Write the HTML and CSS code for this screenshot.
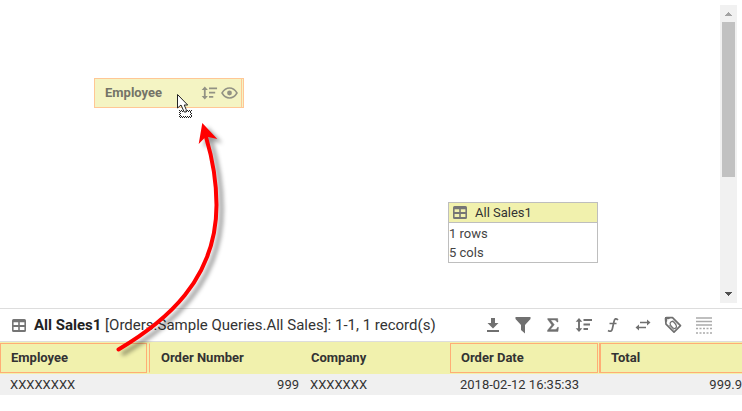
FILE: index.html
```html
<!DOCTYPE html>
<html lang="en">
<head>
<meta charset="utf-8">
<title>All Sales</title>
<link rel="stylesheet" href="styles.css">
</head>
<body>
<svg width="0" height="0" class="defs">
  <symbol id="table" viewBox="0 0 14 12"><path fill-rule="evenodd" d="M1.500 0h11Q14 0 14 1.500v9Q14 12 12.500 12h-11Q0 12 0 10.500v-9Q0 0 1.500 0zM1.600 3v2.600h4.600V3zM7.800 3v2.600h4.600V3zM1.600 7.300v2.900h4.600V7.300zM7.800 7.300v2.900h4.600V7.300z" fill="currentColor"/></symbol>
  <symbol id="sort" viewBox="0 0 18 14"><path d="M4 2v10M8.500 2h8.500M8.500 6.500h6.500M8.500 11h4.500" fill="none" stroke="currentColor" stroke-width="1.900"/><path d="M4 0l3.300 3.700H.700zM4 14l3.300-3.700H.700z" fill="currentColor"/></symbol>
</svg>
<div class="app">
  <main class="canvas">
    <div class="dragged">
      <span class="name">Employee</span>
      <svg class="drag-sort" width="17" height="14"><use href="#sort"/></svg>
      <svg class="eye" width="17" height="12" viewBox="0 0 17 12"><path d="M1 6Q4 1 8.500 1T16 6Q13 11 8.500 11T1 6z" fill="none" stroke="currentColor" stroke-width="1.500"/><circle cx="8.500" cy="6" r="2.400" fill="currentColor"/></svg>
    </div>
    <div class="node">
      <div class="node-title"><svg width="14" height="13" viewBox="0 0 14 12" preserveAspectRatio="none"><use href="#table" width="14" height="12"/></svg><span>All Sales1</span></div>
      <div class="node-body"><div>1 rows</div><div>5 cols</div></div>
    </div>
    <div class="scrollbar">
      <svg class="arrow up" width="7" height="4" viewBox="0 0 7 4"><path d="M3 0h1v1h1v1h1v1h1v1H0V3h1V2h1V1h1z"/></svg>
      <div class="thumb"></div>
      <svg class="arrow down" width="7" height="4" viewBox="0 0 7 4"><path d="M0 0h7v1H6v1H5v1H4v1H3V3H2V2H1V1H0z"/></svg>
    </div>
  </main>
  <header class="toolbar">
    <svg class="title-icon" width="14" height="13" viewBox="0 0 14 12" preserveAspectRatio="none"><use href="#table" width="14" height="12"/></svg>
    <div class="title"><b>All Sales1</b> [Orders.Sample Queries.All Sales]: 1-1, 1 record(s)</div>
    <div class="tools">
      <svg width="14" height="16" viewBox="0 0 14 16"><path d="M5 1h4v5h3.500L7 11.500 1.500 6H5zM1 13h12v2H1z" fill="currentColor"/></svg>
      <svg width="16" height="18" viewBox="0 0 16 18"><path d="M.500 1h15v2L10 9v8.500L6 14V9L.500 3z" fill="currentColor"/></svg>
      <svg width="12" height="14" viewBox="0 0 12 14"><path d="M.700.500h10l.3 3.500h-1Q9.500 2 7.500 2H3.700L7.300 6.700 3.300 11.500H8q2 0 2.500-2.200h1L11 13.500H.500v-1.200L4.800 7 .700 1.500z" fill="currentColor" stroke="currentColor" stroke-width=".4"/></svg>
      <svg width="18" height="14"><use href="#sort"/></svg>
      <svg class="fx" width="12" height="16" viewBox="0 0 12 16"><path d="M11 3Q8 0 7 4.500L5.300 12Q4.500 15.500 1 13.500M2.500 6.500h7" fill="none" stroke="currentColor" stroke-width="1.700"/></svg>
      <svg class="swap" width="16" height="14" viewBox="0 0 16 14"><path d="M5 4.500h8M3 9.500h8" stroke="currentColor" stroke-width="1.500"/><path d="M12 1.500l3.500 3-3.500 3zM4 6.500v6l-3.500-3z" fill="currentColor"/></svg>
      <svg class="tag" width="18" height="18" viewBox="0 0 18 18"><path d="M1.500 2.500l1-1 6 .2 8 8-6.500 6.500-8-8z" fill="none" stroke="currentColor" stroke-width="1.700" stroke-linejoin="round"/><path d="M1 1h6L1.500 7z" fill="currentColor"/><path d="M5 9l5 5M8.500 4l4.500 4.500" stroke="currentColor" stroke-width=".6"/><ellipse cx="9.300" cy="9" rx="2.300" ry="3.900" transform="rotate(-38 9.300 9)" fill="none" stroke="currentColor" stroke-width="1.200"/><circle cx="4" cy="4" r="1" fill="#fff"/></svg>
      <svg class="rows" width="16" height="17" viewBox="0 0 16 17"><path d="M0 1h16M0 4.500h16M0 8h16" stroke="currentColor" stroke-width="1.600"/><path d="M0 11.500h16M0 16h16" stroke="currentColor" stroke-width="1.400" stroke-dasharray="2 1.500"/></svg>
    </div>
  </header>
  <section class="grid">
    <div class="row head">
      <div class="cell box first">Employee</div><div class="cell divided">Order Number</div><div class="cell">Company</div><div class="cell box date">Order Date</div><div class="cell box total">Total</div>
    </div>
    <div class="row data">
      <div class="cell">XXXXXXXX</div><div class="cell number">999</div><div class="cell">XXXXXXX</div><div class="cell">2018-02-12 16:35:33</div><div class="cell number last">999.9</div>
    </div>
  </section>
  <svg class="overlay" width="742" height="411" viewBox="0 0 742 411">
    <g class="trail">
      <path d="M118.500 349.500C165 322 216.500 280 216.500 205C216.500 182 212 157 206 137" fill="none" stroke="#f00" stroke-width="4" stroke-linecap="round"/>
      <path d="M202.300 123L217.300 139L206 136.500L198.700 144z" fill="#f00"/>
    </g>
    <g shape-rendering="crispEdges">
      <rect x="179" y="110" width="13" height="8" fill="#fff"/>
      <path d="M179 110.500h13M179 112.500h2M190 112.500h2M179 114.500h2M190 114.500h2M179 116.500h13" stroke="#222" stroke-dasharray="1 1"/>
      <path d="M180 111.500h12M180 113.500h1M191 113.500h1M180 115.500h1M191 115.500h1M180 117.500h12" stroke="#222" stroke-dasharray="1 1"/>
    </g>
    <path d="M177.500 94.500v13.500l3.500-3 3.200 7h2v-2.500l-2-4.500h3.500z" fill="#fff" stroke="#222"/>
  </svg>
</div>
</body>
</html>
```
FILE: styles.css
```css
* { box-sizing: border-box; }
body { margin: 0; background: #fff; color: #333; font: 13px/18px Roboto, sans-serif; }
svg { display: block; flex: none; }
.defs { position: absolute; }
.app { position: relative; width: 742px; height: 411px; overflow: hidden; }
.canvas { position: relative; height: 308px; display: flex; justify-content: flex-end; padding: 5px 5px 5px 0; }
.dragged { position: absolute; left: 94px; top: 78px; width: 150px; height: 30px; display: flex; align-items: center; padding-left: 10px; color: #929284; background: #f4f4c3; border: 1px solid #ffc795; }
.dragged::after { content: ""; position: absolute; right: 1px; top: 0; bottom: 0; border-left: 1px solid #ffc795; }
.dragged .name { width: 96px; color: #747468; font-weight: 700; }
.eye { margin-left: 3px; }
.node { position: absolute; left: 448px; top: 202px; width: 150px; height: 61px; border: 1px solid #bebebe; background: #fff; }
.node-title { height: 20px; display: flex; align-items: center; gap: 8px; padding-left: 4px; background: #f1f1ad; border-bottom: 1px solid #bebebe; }
.node-title svg { color: #757575; }
.node-body { line-height: 19px; padding-top: 1px; color: #444; }
.scrollbar { width: 17px; height: 298px; display: flex; flex-direction: column; align-items: center; background: #f1f1f1; }
.thumb { width: 13px; height: 155px; background: #c1c1c1; margin-top: 6px; }
.arrow.up { margin-top: 7px; fill: #a3a3a3; }
.arrow.down { margin-top: auto; margin-bottom: 7px; fill: #505050; }
.toolbar { height: 34px; display: flex; align-items: center; padding-left: 12px; border-top: 1px solid #ddd; border-bottom: 1px solid #ddd; }
.title-icon { color: #757575; }
.title { margin-left: 8px; width: 452px; font-size: 15px; white-space: nowrap; color: #333; }
.title b { color: #222; }
.tools { display: grid; grid-template-columns: repeat(8, 30.200px); justify-items: center; align-items: center; color: #707070; margin-left: -8px; }
.fx, .swap, .tag { margin-left: -2px; }
.rows { color: #aaa; }
.row { display: grid; grid-template-columns: repeat(4, 150px) 142px; width: 742px; }
.head { height: 32px; background: #f1f1ad; font-weight: 700; }
.head .cell { margin: 1px 0; height: 30px; line-height: 28px; border: 1px solid transparent; padding-left: 10px; }
.head .box { border-color: #ffad75; }
.head .first { width: 147px; }
.head .divided { border-left-color: #ffad75; margin-left: -1px; padding-left: 11px; }
.head .date { width: 148px; }
.head .total { margin-left: -1px; border-left-width: 2px; border-right: 0; }
.data { height: 21px; background: #f0f0f0; line-height: 21px; }
.data .cell { padding-left: 10px; }
.data .number { text-align: right; padding-right: 1px; }
.data .last { padding-right: 0; }
.overlay { position: absolute; left: 0; top: 0; pointer-events: none; }
.trail { filter: drop-shadow(5px 4px 2px rgba(0,0,0,.4)); }
```
